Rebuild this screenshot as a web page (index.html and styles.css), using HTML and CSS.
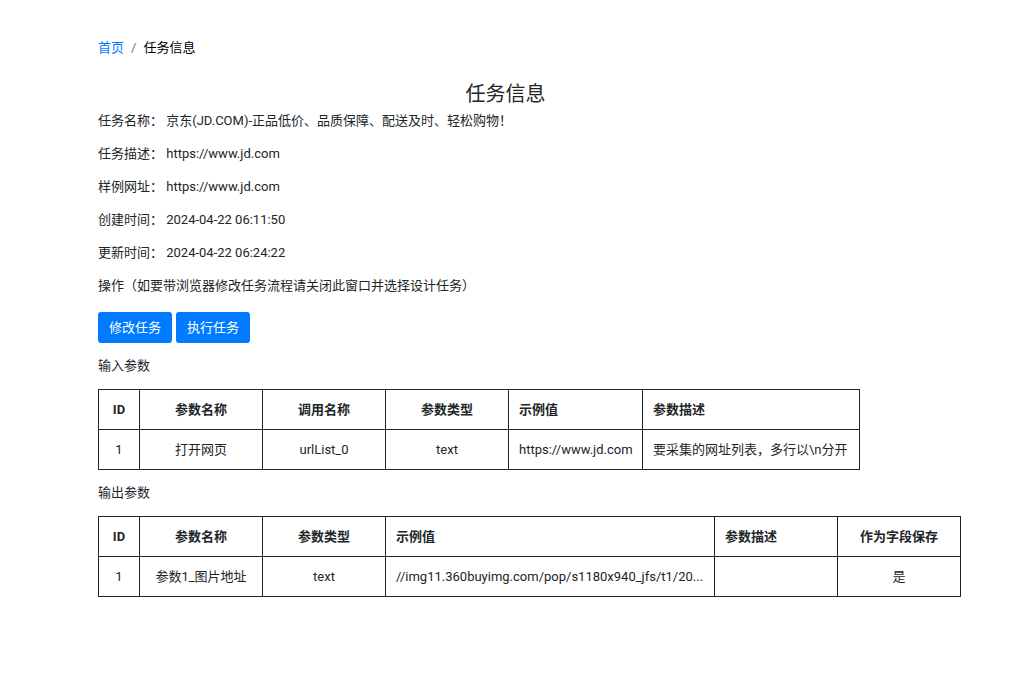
FILE: index.html
```html
<!DOCTYPE html>
<html lang="zh-CN">
  <head>
    <meta charset="UTF-8" />
    <meta name="viewport" content="width=device-width, initial-scale=1.0" />
    <title>任务信息</title>
    <link rel="stylesheet" href="styles.css">
  </head>
  <body>
    <div class="container">
      <nav>
        <ol class="breadcrumb">
          <li><a href="#">首页</a></li>
          <li class="active">任务信息</li>
        </ol>
      </nav>

      <h1>任务信息</h1>
      <div class="task-info">
        <p>任务名称： 京东(JD.COM)-正品低价、品质保障、配送及时、轻松购物！</p>
        <p>任务描述： https://www.jd.com</p>
        <p>样例网址： https://www.jd.com</p>
        <p>创建时间： 2024-04-22 06:11:50</p>
        <p>更新时间： 2024-04-22 06:24:22</p>
        <p>操作（如要带浏览器修改任务流程请关闭此窗口并选择设计任务）</p>
      </div>

      <div class="button-group">
        <button type="button">修改任务</button>
        <button type="button">执行任务</button>
      </div>

      <!-- 输入参数 -->
      <p id="inputTitle">输入参数</p>
      <table aria-labelledby="inputTitle">
        <colgroup>
          <col class="col-id" />
          <col class="col-normal" />
          <col class="col-normal" />
          <col class="col-normal" />
          <col class="col-url" />
          <col class="col-desc" />
        </colgroup>
        <thead>
          <tr>
            <th>ID</th>
            <th>参数名称</th>
            <th>调用名称</th>
            <th>参数类型</th>
            <th class="left">示例值</th>
            <th class="left">参数描述</th>
          </tr>
        </thead>
        <tbody>
          <tr>
            <td>1</td>
            <td>打开网页</td>
            <td>urlList_0</td>
            <td>text</td>
            <td class="left">https://www.jd.com</td>
            <td class="left">要采集的网址列表，多行以\n分开</td>
          </tr>
        </tbody>
      </table>

      <!-- 输出参数 -->
      <p id="outputTitle">输出参数</p>
      <table aria-labelledby="outputTitle">
        <colgroup>
          <col class="col-id" />
          <col class="col-normal" />
          <col class="col-normal" />
          <col class="col-example" />
          <col class="col-normal" />
          <col class="col-normal" />
        </colgroup>
        <thead>
          <tr>
            <th>ID</th>
            <th>参数名称</th>
            <th>参数类型</th>
            <th class="left">示例值</th>
            <th class="left">参数描述</th>
            <th>作为字段保存</th>
          </tr>
        </thead>
        <tbody>
          <tr>
            <td>1</td>
            <td>参数1_图片地址</td>
            <td>text</td>
            <td class="left">//img11.360buyimg.com/pop/s1180x940_jfs/t1/20...</td>
            <td class="left"></td>
            <td>是</td>
          </tr>
        </tbody>
      </table>
    </div>
  </body>
</html>
```
FILE: styles.css
```css
* {
  box-sizing: border-box;
}
body {
  margin: 0;
  background-color: #fff;
  color: #212529;
  font-family: Roboto, "Noto Sans CJK SC", sans-serif;
  font-size: 13px;
  line-height: 20px;
}
.container {
  padding: 38px 111px 38px 98px;
}
.breadcrumb {
  display: flex;
  margin: 0 0 24px;
  padding: 0;
  list-style: none;
}
.breadcrumb a {
  color: #007bff;
  text-decoration: none;
}
.breadcrumb .active {
  color: #000;
}
.breadcrumb .active::before {
  content: "/";
  padding: 0 7px;
  color: #6c757d;
}
h1 {
  margin: 0 0 5px;
  font-size: 20px;
  font-weight: 400;
  line-height: 24px;
  text-align: center;
}
p {
  margin: 0 0 13px;
}
.button-group {
  display: flex;
  gap: 4px;
  margin: 16px 0 13px;
}
button {
  height: 31px;
  padding: 0 11px;
  border: none;
  border-radius: 3px;
  background-color: #007bff;
  color: #fff;
  font: inherit;
  cursor: pointer;
}
table {
  table-layout: fixed;
  width: 1px;
  margin-bottom: 13px;
  border-collapse: collapse;
}
.col-id {
  width: 41px;
}
.col-normal {
  width: 123px;
}
.col-url {
  width: 134px;
}
.col-desc {
  width: 217px;
}
.col-example {
  width: 329px;
}
th,
td {
  height: 40px;
  padding: 9px 10px;
  border: 1px solid #212529;
  text-align: center;
  white-space: nowrap;
}
th {
  font-weight: 700;
}
.left {
  text-align: left;
}
```
